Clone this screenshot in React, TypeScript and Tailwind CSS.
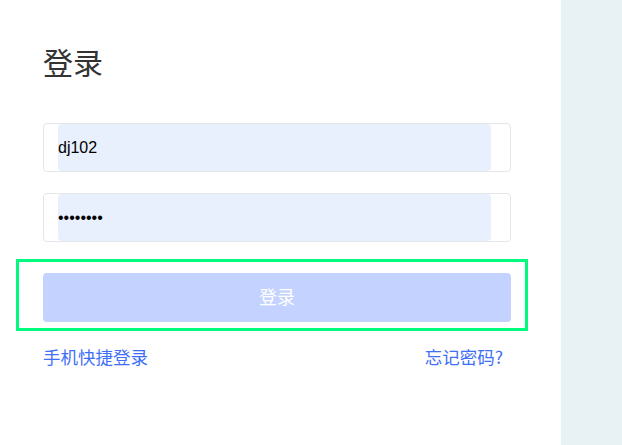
import { useState } from "react"

const cjk = { fontFamily: '"Noto Sans CJK SC", "Noto Sans", sans-serif' }
const latin = { fontFamily: '"Liberation Sans", Arial, sans-serif' }

export default function App() {
  const [user, setUser] = useState("dj102")
  const [pwd, setPwd] = useState("12345678")

  return (
    <div className="flex h-[445px] w-[622px] overflow-hidden">
      <div className="relative w-[561px] bg-white pl-[43px] pt-[40px]">
        <h1 className="h-[42px] text-[30px] leading-[42px] text-[#333]" style={cjk}>
          登录
        </h1>

        <div className="mt-[41px] flex w-[468px] flex-col">
          <div className="h-[49px] rounded-[4px] border border-[#e4e6ea] pl-[14px] pr-[19px]">
            <input
              value={user}
              onChange={(e) => setUser(e.target.value)}
              className="h-full w-full rounded-[4px] bg-[#e8f0fe] text-[16px] text-black outline-none"
              style={latin}
            />
          </div>
          <div className="mt-[21px] h-[49px] rounded-[4px] border border-[#e4e6ea] pl-[14px] pr-[19px]">
            <input
              type="password"
              value={pwd}
              onChange={(e) => setPwd(e.target.value)}
              className="h-full w-full rounded-[4px] bg-[#e8f0fe] text-[16px] text-black outline-none"
              style={latin}
            />
          </div>

          <button
            className="mt-[31px] h-[49px] w-full rounded-[4px] bg-[#c3d2fe] pb-[2px] text-[18px] text-white"
            style={cjk}
          >
            登录
          </button>

          <div className="mt-[23px] flex items-center justify-between pr-[8px] text-[17.5px] leading-[24px] text-[#3f6ff6]" style={cjk}>
            <a href="#">手机快捷登录</a>
            <a href="#">忘记密码?</a>
          </div>
        </div>

        {/* highlight frame over the submit button */}
        <div className="pointer-events-none absolute left-[16px] top-[259px] h-[72px] w-[512px] border-[3px] border-[#00fa7d]" />
      </div>
      <div className="flex-1 bg-[#e8f2f4]" />
    </div>
  )
}
